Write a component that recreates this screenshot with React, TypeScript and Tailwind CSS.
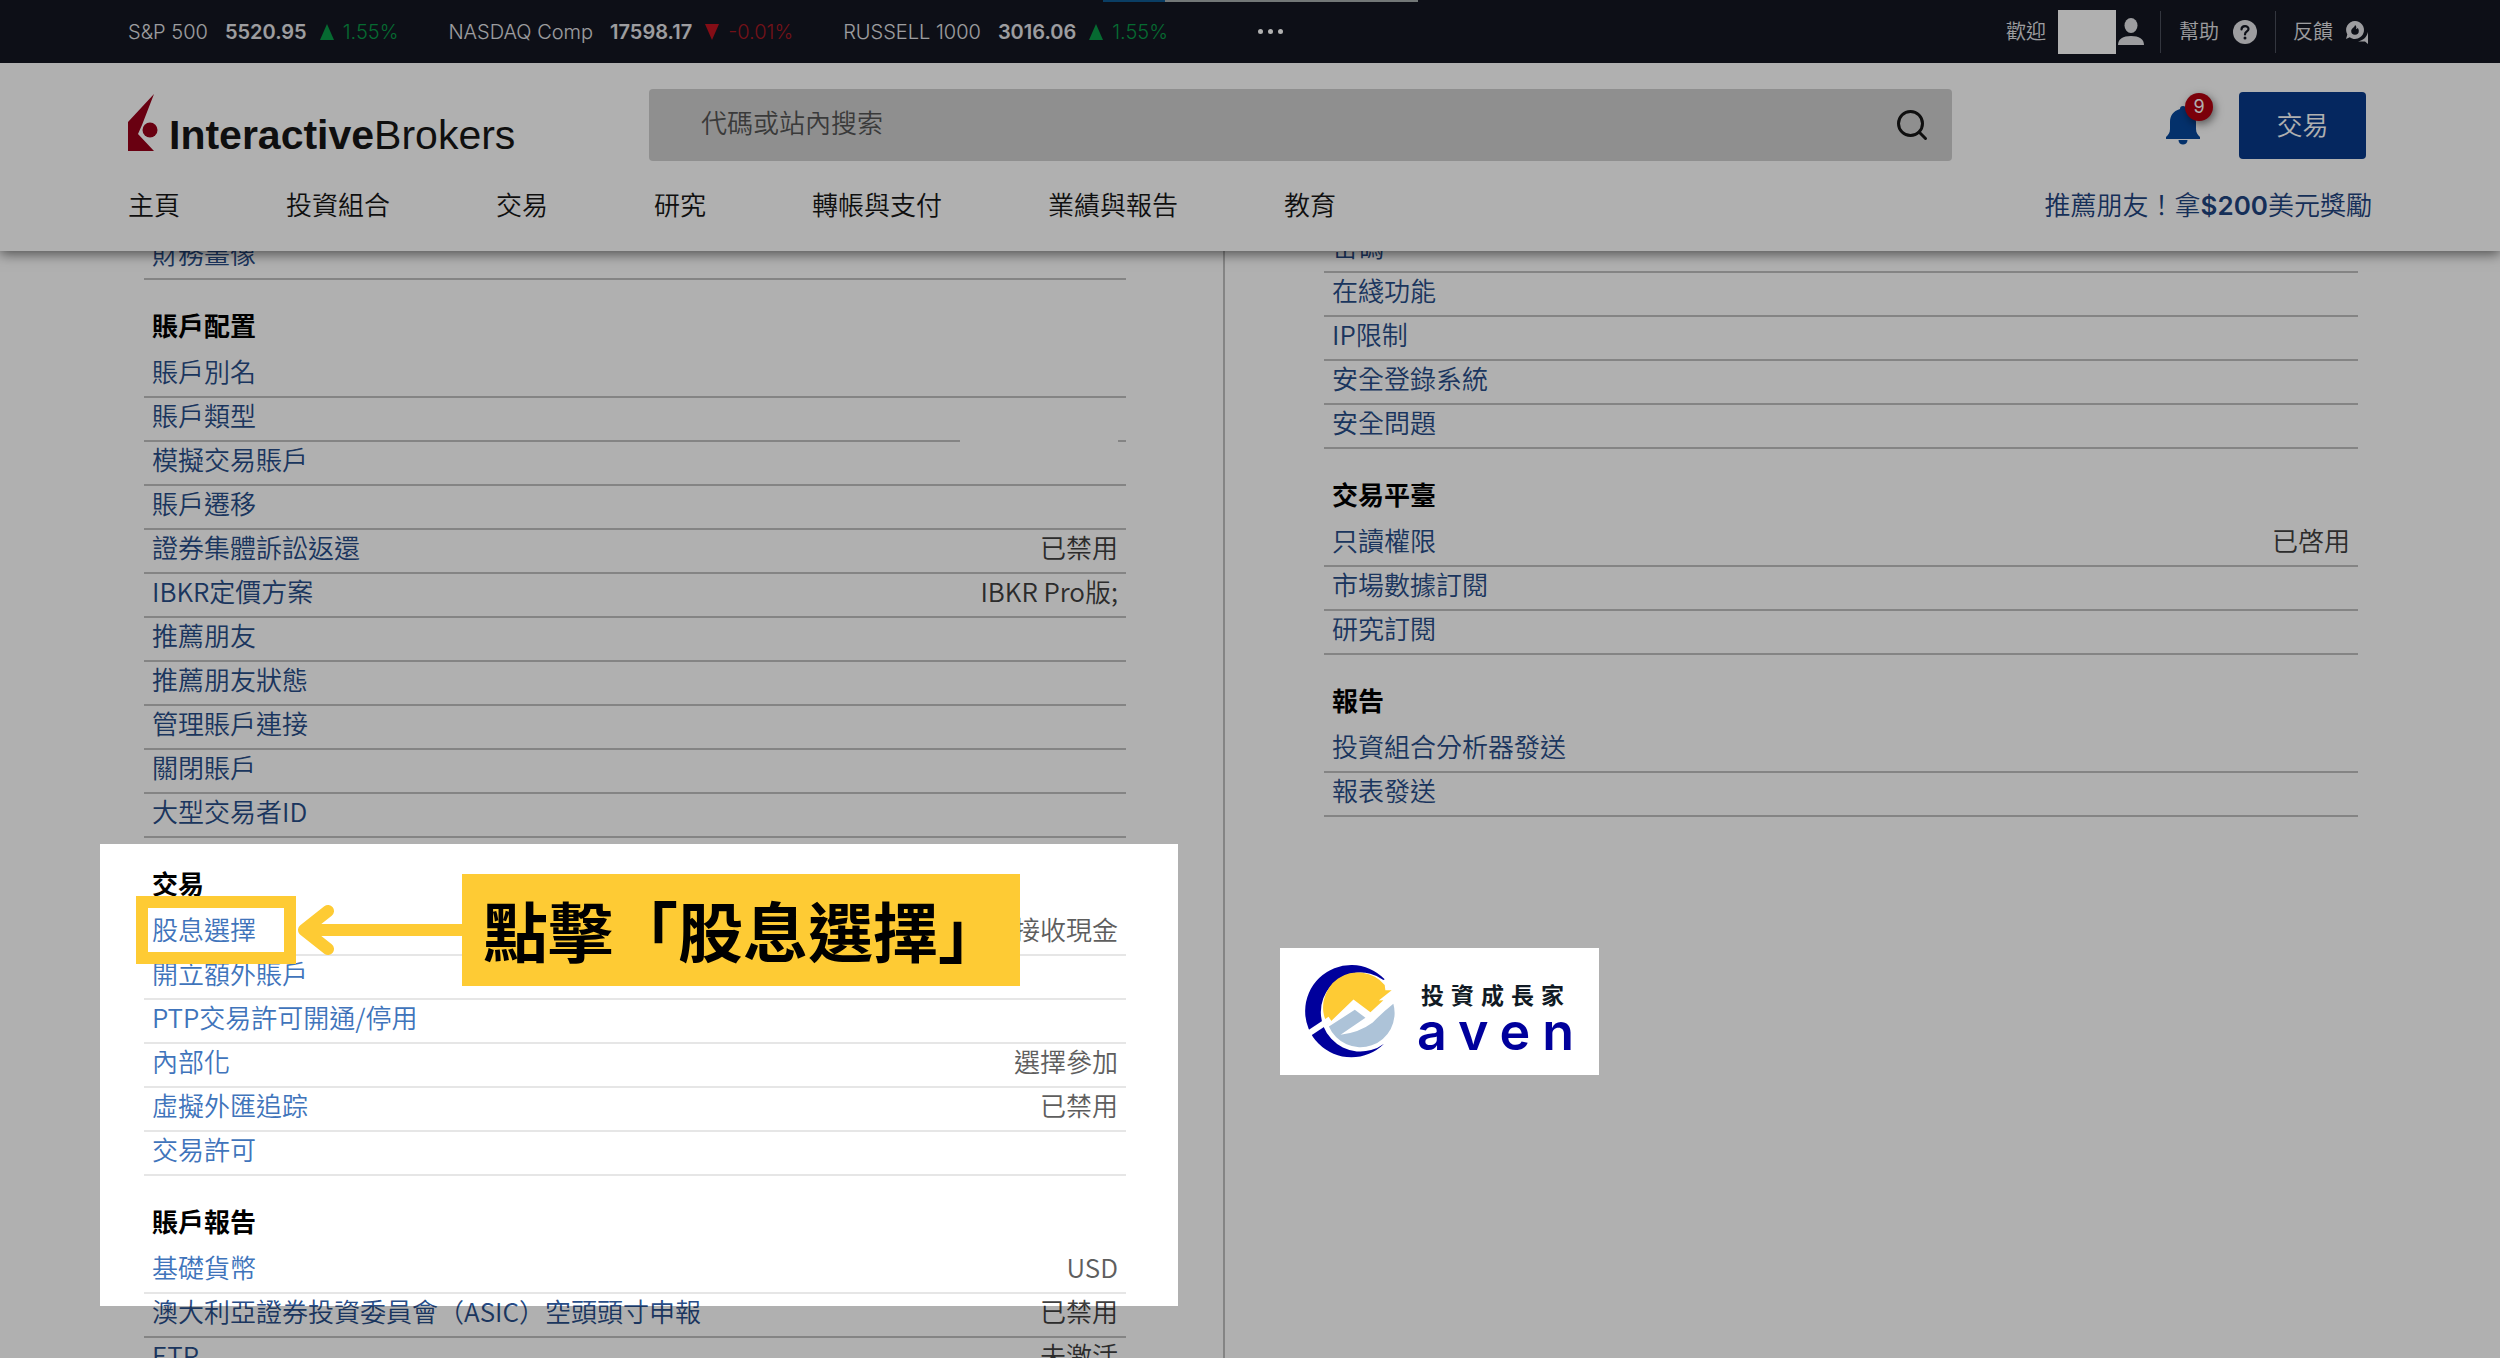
import React from "react";
import { LuSearch } from "react-icons/lu";

type Row = {
  label: string;
  value?: string;
  masked?: boolean;
  light?: boolean;
};

type Section = {
  title?: string;
  rows: Row[];
};

const quotes = [
  { name: "S&P 500", price: "5520.95", change: "1.55%", up: true },
  { name: "NASDAQ Comp", price: "17598.17", change: "-0.01%", up: false },
  { name: "RUSSELL 1000", price: "3016.06", change: "1.55%", up: true },
];

const navItems = [
  "主頁",
  "投資組合",
  "交易",
  "研究",
  "轉帳與支付",
  "業績與報告",
  "教育",
];

const leftSections: Section[] = [
  { rows: [{ label: "財務畫像" }] },
  {
    title: "賬戶配置",
    rows: [
      { label: "賬戶別名" },
      { label: "賬戶類型", masked: true },
      { label: "模擬交易賬戶" },
      { label: "賬戶遷移" },
      { label: "證券集體訴訟返還", value: "已禁用" },
      { label: "IBKR定價方案", value: "IBKR Pro版;" },
      { label: "推薦朋友" },
      { label: "推薦朋友狀態" },
      { label: "管理賬戶連接" },
      { label: "關閉賬戶" },
      { label: "大型交易者ID" },
    ],
  },
  {
    title: "交易",
    rows: [
      { label: "股息選擇", value: "接收現金", light: true },
      { label: "開立額外賬戶", light: true },
      { label: "PTP交易許可開通/停用", light: true },
      { label: "內部化", value: "選擇參加", light: true },
      { label: "虛擬外匯追踪", value: "已禁用", light: true },
      { label: "交易許可", light: true },
    ],
  },
  {
    title: "賬戶報告",
    rows: [
      { label: "基礎貨幣", value: "USD", light: true },
      { label: "澳大利亞證券投資委員會（ASIC）空頭頭寸申報", value: "已禁用" },
      { label: "ETP", value: "未激活" },
    ],
  },
];

const rightSections: Section[] = [
  {
    rows: [
      { label: "密碼" },
      { label: "在綫功能" },
      { label: "IP限制" },
      { label: "安全登錄系統" },
      { label: "安全問題" },
    ],
  },
  {
    title: "交易平臺",
    rows: [
      { label: "只讀權限", value: "已啓用" },
      { label: "市場數據訂閱" },
      { label: "研究訂閱" },
    ],
  },
  {
    title: "報告",
    rows: [{ label: "投資組合分析器發送" }, { label: "報表發送" }],
  },
];

const SettingRow = ({ label, value, masked, light }: Row) => (
  <li
    className={
      light
        ? "relative flex h-11 items-start justify-between border-b-2 border-[#e6e6e6] px-2 text-[#4074bb]"
        : "relative flex h-11 items-start justify-between border-b-2 border-[#c0c0c0] px-2 text-[#284d88]"
    }
  >
    <a href="#" className="leading-[34px]">
      {label}
    </a>
    {value && (
      <span
        className={
          light
            ? "leading-[34px] text-[#5e5e5e]"
            : "leading-[34px] text-[#404040]"
        }
      >
        {value}
      </span>
    )}
    {masked && (
      <span className="absolute right-2 -bottom-1 h-10 w-[158px] bg-white" />
    )}
  </li>
);

const SettingSection = ({ title, rows }: Section) => (
  <section>
    {title && (
      <h2 className="px-2 pt-7 pb-3 leading-[34px] font-bold text-black">
        {title}
      </h2>
    )}
    <ul>
      {rows.map((row) => (
        <SettingRow key={row.label} {...row} />
      ))}
    </ul>
  </section>
);

const TopBar = () => (
  <div className="relative flex h-[63px] items-center justify-between bg-[#131722] pr-[131px] pl-32 font-[Inter,'Noto_Sans_CJK_TC',sans-serif] text-xl text-[#e4e4e8]">
    <div className="absolute top-0 left-[44.1%] flex h-[2px] w-[315px]">
      <span className="w-[62px] bg-[#0f5b91]" />
      <span className="flex-1 bg-[#a5adad]" />
    </div>
    <div className="flex items-center gap-[50px]">
      {quotes.map((q) => (
        <div key={q.name} className="flex items-center">
          <span>{q.name}</span>
          <span className="ml-[17px] font-semibold">{q.price}</span>
          <svg
            viewBox="0 0 16 16"
            className={q.up ? "mx-3 h-4 w-4 text-[#0a9a48]" : "mx-3 h-4 w-4 text-[#c01420]"}
          >
            <path
              d={q.up ? "M8 0l7 16H1z" : "M8 16l7-16H1z"}
              fill="currentColor"
            />
          </svg>
          <span
            className={q.up ? "-ml-1 text-[#0a9a48]" : "-ml-1 text-[#a81a24]"}
          >
            {q.change}
          </span>
        </div>
      ))}
      <button aria-label="更多" className="ml-10 flex gap-[5px]">
        <span className="h-[5px] w-[5px] rounded-full bg-white" />
        <span className="h-[5px] w-[5px] rounded-full bg-white" />
        <span className="h-[5px] w-[5px] rounded-full bg-white" />
      </button>
    </div>
    <div className="flex items-center">
      <span>歡迎</span>
      <span className="ml-3 h-11 w-[58px] bg-white" />
      <svg viewBox="0 0 26 28" className="ml-[2px] h-7 w-[26px]" fill="currentColor">
        <ellipse cx="13" cy="7.500" rx="6.500" ry="7.500" />
        <path d="M0 27c0-6 5-9 13-9s13 3 13 9z" />
      </svg>
      <span className="ml-4 h-[42px] w-px bg-[#4a4f5c]" />
      <a href="#" className="ml-[18px] flex items-center gap-[14px]">
        幫助
        <svg viewBox="0 0 24 24" className="h-6 w-6">
          <circle cx="12" cy="12" r="12" fill="currentColor" />
          <path
            d="M8.500 9.500c0-4.500 7-4.500 7-.5 0 2.600-3.500 2.400-3.500 5.500"
            fill="none"
            stroke="#131722"
            strokeWidth="2.200"
            strokeLinecap="round"
          />
          <circle cx="12" cy="18" r="1.500" fill="#131722" />
        </svg>
      </a>
      <span className="ml-[18px] h-[42px] w-px bg-[#4a4f5c]" />
      <a href="#" className="ml-[17px] flex items-center gap-3">
        反饋
        <svg viewBox="0 0 24 24" className="h-6 w-6" fill="currentColor">
          <path d="M10 1a9 9 0 1 1-5.300 16.300L1 19l1.300-4.500A9 9 0 0 1 10 1z" />
          <path d="M23 12v12l-3-2.500h-7c5-1 8.500-4 10-9.500z" />
          <path
            d="M10 5c0 2.500-3.800 3-3.800 6a3.800 3.800 0 0 0 7.600 0c0-1.300-.4-2.200-1.300-3-.4.800-.8 1.100-1.400 1.100.6-1.700.2-3.200-1.100-4.100z"
            fill="#131722"
          />
        </svg>
      </a>
    </div>
  </div>
);

const BrokerLogo = () => (
  <a href="#" className="flex w-[521px] items-end gap-[11px] pb-[6px] text-[#161616]">
    <svg viewBox="0 0 30 57" className="h-[57px] w-[30px]" fill="#98001a">
      <path d="M26 0L0 28v29h26L10 40L14 31z" />
      <circle cx="22" cy="36" r="7.500" />
    </svg>
    <span className="font-['Liberation_Sans',sans-serif] text-[41px] leading-8">
      <b>Interactive</b>Brokers
    </span>
  </a>
);

const Header = () => (
  <header className="relative z-10 shrink-0 shadow-[0_3px_12px_rgba(0,0,0,0.55)]">
    <TopBar />
    <div className="bg-white px-32 pt-[26px] pb-[30px]">
      <div className="flex items-center">
        <BrokerLogo />
        <form className="flex h-[72px] flex-1 items-center rounded bg-[#d0d0d0] pr-[22px] pl-[52px]">
          <input
            type="search"
            aria-label="代碼或站內搜索"
            placeholder="代碼或站內搜索"
            className="h-full min-w-0 flex-1 pb-2 outline-none placeholder:text-[#555555]"
          />
          <button type="button" aria-label="搜索">
            <LuSearch className="h-9 w-9 stroke-2 text-[#161616]" />
          </button>
        </form>
        <div className="flex w-[420px] items-center justify-end gap-[38px] pr-[6px]">
          <button aria-label="通知" className="relative">
            <svg viewBox="0 0 36 40" className="h-10 w-9" fill="#07479c">
              <path d="M15 4a3 3 0 0 1 6 0c7 2 10 7 10 13v7c0 4 2 6 4 8v2H1v-2c2-2 4-4 4-8v-7C5 11 8 6 15 4z" />
              <path d="M13.500 35h9c0 6-9 6-9 0z" />
            </svg>
            <span className="absolute -top-3 -right-3 flex h-7 w-7 items-center justify-center rounded-full bg-[#b3000f] font-[Inter,sans-serif] text-lg font-normal text-white shadow-[2px_3px_8px_rgba(0,0,0,0.5)]">
              9
            </span>
          </button>
          <button className="h-[67px] w-[127px] rounded bg-[#08398a] pb-1 text-white">
            交易
          </button>
        </div>
      </div>
      <div className="mt-[26px] flex h-[34px] items-center justify-between leading-8">
        <nav className="flex gap-[106px] text-[#161616]">
          {navItems.map((item) => (
            <a key={item} href="#">
              {item}
            </a>
          ))}
        </nav>
        <a href="#" className="text-[#1f4480]">
          推薦朋友！拿
          <b className="font-[Inter,sans-serif] leading-none font-semibold">
            $200
          </b>
          美元獎勵
        </a>
      </div>
    </div>
  </header>
);

const AvenCard = () => (
  <div className="absolute top-[948px] left-[1280px] flex h-[127px] w-[319px] items-center gap-[21px] bg-white pl-[23px]">
    <svg viewBox="130 100 280 290" className="h-[97px] w-[93px]">
      <path
        d="M376 148A139 139 0 1 0 374 342A119 119 0 1 1 372 150z"
        fill="#00009c"
      />
      <path
        d="M204 284A105 105 0 0 1 376 165L378 181L397 181L358 212L372 211L333 247L282 209z"
        fill="#fecb34"
      />
      <path
        d="M208 290L286 240L318 264L243 315Q300 308 340 278Q365 252 402 222A103 103 0 0 1 208 290z"
        fill="#adc3d8"
      />
      <path d="M138 317L212 268" stroke="white" strokeWidth="18" />
    </svg>
    <div className="flex flex-col pt-2">
      <span className="pl-1 text-[23px] leading-8 font-bold tracking-[7px] text-[#111a24]">
        投資成長家
      </span>
      <span className="font-[Inter,sans-serif] text-[52px] leading-11 font-semibold tracking-[12px] text-[#00009c]">
        aven
      </span>
    </div>
  </div>
);

const Guide = () => (
  <div className="absolute inset-0 z-20">
    {/* spotlight: its shadow dims everything around it */}
    <div className="absolute top-[844px] left-[100px] h-[462px] w-[1078px] shadow-[0_0_0_3000px_rgba(0,0,0,0.31)]" />
    <div className="absolute top-[896px] left-[136px] h-[68px] w-[160px] border-12 border-[#fecb34]" />
    <svg
      viewBox="0 0 168 60"
      className="absolute top-[900px] left-[294px] h-[60px] w-[168px]"
      fill="none"
      stroke="#fecb34"
      strokeWidth="12"
      strokeLinecap="round"
      strokeLinejoin="round"
    >
      <path d="M10 30h158M34 11L10 30l24 19" />
    </svg>
    <p className="absolute top-[874px] left-[462px] flex h-[112px] w-[558px] items-center bg-[#fecb34] pl-[21px] text-[65px] font-bold whitespace-nowrap text-black">
      點擊「股息選擇」
    </p>
    <AvenCard />
  </div>
);

const App = () => {
  return (
    <div
      lang="zh-Hant"
      className="relative flex h-screen flex-col overflow-hidden bg-white font-['Noto_Sans_CJK_TC',sans-serif] text-[26px] font-[350]"
    >
      <Header />
      <main className="flex min-h-0 flex-1 overflow-hidden">
        <div className="w-[49%] border-r-2 border-[#c0c0c0] pr-[97px] pl-36">
          <div className="-mt-[15px]">
            {leftSections.map((section, i) => (
              <SettingSection key={i} {...section} />
            ))}
          </div>
        </div>
        <div className="flex-1 pr-[142px] pl-[99px]">
          <div className="-mt-[22px]">
            {rightSections.map((section, i) => (
              <SettingSection key={i} {...section} />
            ))}
          </div>
        </div>
      </main>
      <Guide />
    </div>
  );
};

export default App;
